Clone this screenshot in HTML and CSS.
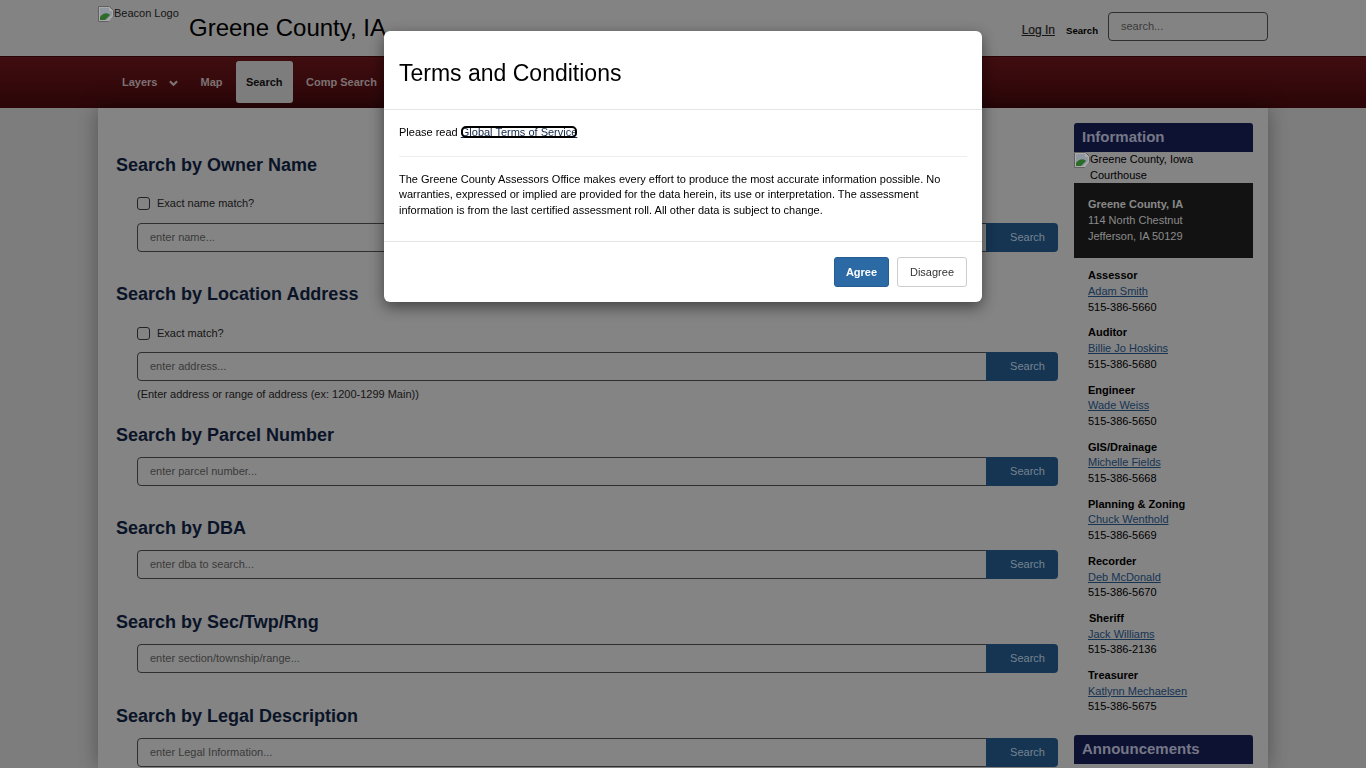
FILE: index.html
```html
<!DOCTYPE html>
<html lang="en">
<head>
    <meta charset="UTF-8">
    <meta name="viewport" content="width=device-width, initial-scale=1.0">
    <title>Greene County, IA</title>
    <link rel="stylesheet" href="styles.css">
</head>
<body>
<svg class="sprite" width="0" height="0">
    <symbol id="broken" viewBox="0 0 16 16">
        <path d="M.5.5h11l4 4v6l-4 5H.5z" fill="#f4f4f4" stroke="#8a8a8a"/>
        <path d="M2 2h9v3h3v4l-5 5H2z" fill="#cfd8e6"/>
        <path d="M2 14v-3c2-3 6-5 9-3l1 1-5 5z" fill="#3f9a3a"/>
        <path d="M15.500 9l-5 7h5z" fill="#bdbdbd"/>
    </symbol>
</svg>

<header class="topbar">
    <div class="topbar-inner">
        <div class="logo"><svg class="broken-img"><use href="#broken"/></svg><span>Beacon Logo</span></div>
        <h1 class="site-title">Greene County, IA</h1>
        <div class="topbar-right">
            <a class="login" href="#">Log In</a>
            <span class="top-search-label">Search</span>
            <input class="top-search" type="text" placeholder="search...">
        </div>
    </div>
</header>

<nav class="mainnav">
    <ul class="nav-list">
        <li class="nav-item nav-layers">Layers
            <svg class="chev" viewBox="0 0 10 6" width="9" height="6"><path d="M1 1l4 4 4-4" fill="none" stroke="currentColor" stroke-width="2.400"/></svg>
        </li>
        <li class="nav-item">Map</li>
        <li class="nav-item active">Search</li>
        <li class="nav-item">Comp Search</li>
    </ul>
</nav>

<div class="page">
    <main class="search-col">
        <section class="search-section owner">
            <h2>Search by Owner Name</h2>
            <label class="check-row"><input type="checkbox"> Exact name match?</label>
            <div class="search-group">
                <input type="text" placeholder="enter name...">
                <button class="search-btn">Search</button>
            </div>
        </section>
        <section class="search-section with-help">
            <h2>Search by Location Address</h2>
            <label class="check-row"><input type="checkbox"> Exact match?</label>
            <div class="search-group">
                <input type="text" placeholder="enter address...">
                <button class="search-btn">Search</button>
            </div>
            <p class="help">(Enter address or range of address (ex: 1200-1299 Main))</p>
        </section>
        <section class="search-section">
            <h2>Search by Parcel Number</h2>
            <div class="search-group">
                <input type="text" placeholder="enter parcel number...">
                <button class="search-btn">Search</button>
            </div>
        </section>
        <section class="search-section">
            <h2>Search by DBA</h2>
            <div class="search-group">
                <input type="text" placeholder="enter dba to search...">
                <button class="search-btn">Search</button>
            </div>
        </section>
        <section class="search-section">
            <h2>Search by Sec/Twp/Rng</h2>
            <div class="search-group">
                <input type="text" placeholder="enter section/township/range...">
                <button class="search-btn">Search</button>
            </div>
        </section>
        <section class="search-section">
            <h2>Search by Legal Description</h2>
            <div class="search-group">
                <input type="text" placeholder="enter Legal Information...">
                <button class="search-btn">Search</button>
            </div>
        </section>
    </main>

    <aside class="sidebar">
        <h3 class="side-head">Information</h3>
        <div class="courthouse"><svg class="broken-img"><use href="#broken"/></svg><span>Greene County, Iowa Courthouse</span></div>
        <div class="address">
            <strong>Greene County, IA</strong><br>
            114 North Chestnut<br>
            Jefferson, IA 50129
        </div>
        <div class="contacts">
            <div class="contact"><strong>Assessor</strong><br><a href="#">Adam Smith</a><br>515-386-5660</div>
            <div class="contact"><strong>Auditor</strong><br><a href="#">Billie Jo Hoskins</a><br>515-386-5680</div>
            <div class="contact"><strong>Engineer</strong><br><a href="#">Wade Weiss</a><br>515-386-5650</div>
            <div class="contact"><strong>GIS/Drainage</strong><br><a href="#">Michelle Fields</a><br>515-386-5668</div>
            <div class="contact"><strong>Planning &amp; Zoning</strong><br><a href="#">Chuck Wenthold</a><br>515-386-5669</div>
            <div class="contact"><strong>Recorder</strong><br><a href="#">Deb McDonald</a><br>515-386-5670</div>
            <div class="contact"><strong class="sheriff">Sheriff</strong><br><a href="#">Jack Williams</a><br>515-386-2136</div>
            <div class="contact"><strong>Treasurer</strong><br><a href="#">Katlynn Mechaelsen</a><br>515-386-5675</div>
        </div>
        <h3 class="side-head">Announcements</h3>
    </aside>
</div>

<div class="backdrop"></div>

<div class="modal">
    <div class="modal-header">
        <h4 class="modal-title">Terms and Conditions</h4>
    </div>
    <div class="modal-body">
        <p class="read-line">Please read <a class="terms-link" href="#">Global Terms of Service</a></p>
        <hr>
        <p>The Greene County Assessors Office makes every effort to produce the most accurate information possible. No warranties, expressed or implied are provided for the data herein, its use or interpretation. The assessment information is from the last certified assessment roll. All other data is subject to change.</p>
    </div>
    <div class="modal-footer">
        <button class="btn btn-agree">Agree</button>
        <button class="btn btn-disagree">Disagree</button>
    </div>
</div>
</body>
</html>
```

FILE: styles.css
```css
* { box-sizing: border-box; }
html, body { height: 100%; }
body {
    margin: 0;
    height: 768px;
    overflow: hidden;
    font-family: "Liberation Sans", Arial, sans-serif;
    font-size: 11px;
    line-height: 1.42857;
    color: #000;
    background: #b4b4b4;
}
.sprite { position: absolute; }
.broken-img { width: 16px; height: 16px; flex: none; }

/* top bar */
.topbar { height: 56px; background: #bcbcbc; }
.topbar-inner {
    width: 1170px;
    margin-left: 98px;
    display: flex;
    height: 56px;
}
.logo {
    width: 91px;
    padding-top: 6px;
    display: flex;
    align-items: flex-start;
    color: #222;
}
.site-title {
    margin: 13px 0 0;
    font-size: 24px;
    font-weight: normal;
    line-height: 30px;
}
.topbar-right {
    margin-left: auto;
    display: flex;
    align-items: flex-start;
}
.login {
    margin-top: 22px;
    font-size: 12px;
    color: #222;
    -webkit-text-stroke: 0.2px #222;
}
.top-search-label {
    margin: 24px 0 0 11px;
    font-size: 9.600px;
    font-weight: bold;
    line-height: 14px;
}
.top-search {
    width: 160px;
    height: 29px;
    margin: 12px 0 0 10px;
    padding: 0 12px 1px;
    font: 11px "Liberation Sans", Arial, sans-serif;
    background: #bcbcbc;
    border: 1px solid #444;
    border-radius: 4px;
}
input::placeholder { color: #555; opacity: 1; }

/* nav */
.mainnav {
    height: 52px;
    background: linear-gradient(#5c1317, #3e090c);
    border-top: 1px solid #3a0709;
}
.nav-list {
    list-style: none;
    margin: 0 0 0 98px;
    padding: 4px 0 0;
    display: flex;
}
.nav-item {
    height: 42px;
    padding: 0 10.200px;
    margin-right: 3px;
    font-weight: bold;
    line-height: 42px;
    color: #b3a3a4;
    white-space: nowrap;
}
.nav-layers { padding-left: 24px; padding-right: 9.800px; }
.chev { margin-left: 8px; vertical-align: 0; }
.nav-item.active { background: #b4b4b4; color: #111; border-radius: 3px; }

/* page card */
.page {
    width: 1170px;
    margin-left: 98px;
    height: 660px;
    display: flex;
    background: #bdbdbd;
    box-shadow: 0 0 20px rgba(0, 0, 0, 0.35);
}
.search-col {
    width: 976px;
    padding: 47px 16px 0 18px;
    overflow: hidden;
}
.search-section { margin-bottom: 32.670px; }
.search-section.owner { margin-bottom: 32px; }
.search-section.with-help { margin-bottom: 21.990px; }
.search-section h2 {
    margin: 0 0 12px;
    font-size: 18px;
    line-height: 20px;
    color: #0f1c38;
}
.check-row {
    display: flex;
    align-items: center;
    gap: 7px;
    height: 14px;
    margin: 22px 0 12px 21px;
    color: #222;
}
.with-help .check-row { margin: 23px 0 11px 21px; }
.check-row input {
    appearance: none;
    width: 13px;
    height: 13px;
    margin: 0 0 2px;
    background: #bdbdbd;
    border: 1px solid #333;
    border-radius: 3px;
}
.search-group {
    display: flex;
    margin-left: 21px;
    height: 29px;
}
.search-group input {
    flex: 1;
    min-width: 0;
    padding: 0 12px 1px;
    font: 11px "Liberation Sans", Arial, sans-serif;
    background: #bdbdbd;
    border: 1px solid #444;
    border-radius: 4px 0 0 4px;
}
.search-btn {
    width: 72px;
    margin-left: -1px;
    padding: 0 0 1px 11px;
    font: 11px "Liberation Sans", Arial, sans-serif;
    color: #a9bccd;
    background: #1f4c77;
    border: 0;
    border-radius: 0 4px 4px 0;
}
.help { margin: 6px 0 0 21px; color: #222; }

/* sidebar */
.sidebar { width: 179px; padding-top: 15px; }
.side-head {
    margin: 0;
    height: 29px;
    padding-left: 8px;
    font-size: 15px;
    line-height: 28px;
    color: #a8abc0;
    background: #141a4a;
    border-radius: 3px 3px 0 0;
}
.courthouse { display: flex; height: 31px; }
.courthouse span { width: 120px; }
.address {
    height: 75px;
    padding: 14.300px 14px 0;
    color: #c4c4c4;
    background: #1b1b1b;
}
.contacts { padding: 10.300px 14px 9.700px; }
.contact { margin-bottom: 10px; }
.contact a { color: #234b78; }
.sheriff { margin-left: 1px; }

/* modal */
.backdrop {
    position: fixed;
    inset: 0;
    background: rgba(0, 0, 0, 0.3);
}
.modal {
    position: fixed;
    left: 384px;
    top: 31px;
    width: 598px;
    height: 271px;
    background: #fff;
    border-radius: 6px;
    box-shadow: 0 5px 15px rgba(0, 0, 0, 0.5);
}
.modal-header {
    height: 79px;
    padding: 27px 15px 0;
    border-bottom: 1px solid #e5e5e5;
}
.modal-title { margin: 0; font-size: 23px; font-weight: normal; line-height: 30px; }
.modal-body { height: 131px; padding: 15px; }
.modal-body p { margin: 0; }
.modal-body hr { margin: 15px 0; border: 0; border-top: 1px solid #eee; }
.terms-link {
    color: #14284a;
    border-radius: 5px;
    outline: 2px solid #000;
    outline-offset: -2px;
}
.modal-footer {
    height: 61px;
    padding: 15px;
    display: flex;
    justify-content: flex-end;
    gap: 8px;
    border-top: 1px solid #e5e5e5;
}
.btn {
    height: 30px;
    padding: 0 0 1px;
    font: 11px "Liberation Sans", Arial, sans-serif;
    border-radius: 3px;
}
.btn-agree { width: 55px; color: #fff; font-weight: bold; background: #2b6aa5; border: 1px solid #255d91; }
.btn-disagree { width: 70px; color: #333; background: #fff; border: 1px solid #ccc; }
```
